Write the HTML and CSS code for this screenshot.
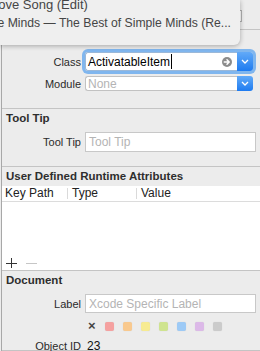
FILE: index.html
```html
<!DOCTYPE html>
<html lang="en">
<head>
    <meta charset="UTF-8">
    <title>Identity Inspector</title>
    <link rel="stylesheet" href="styles.css">
</head>
<body>
    <div class="panel">
        <section class="section top">
            <div class="row">
                <span class="label"></span>
                <div class="stub-field"></div>
            </div>
        </section>

        <section class="section custom-class">
            <h2>Custom Class</h2>
            <div class="row class-row">
                <span class="label">Class</span>
                <div class="combo focused">
                    <div class="combo-input">
                        <span class="value">ActivatableItem</span><span class="caret"></span>
                        <svg class="go" width="10" height="10" viewBox="0 0 10 10">
                            <circle cx="5" cy="5" r="5" fill="#8c8c8c"/>
                            <path d="M2.3 5h4.6M5 2.8l2.2 2.2L5 7.2" stroke="#fff" stroke-width="1.5" fill="none" stroke-linecap="round" stroke-linejoin="round"/>
                        </svg>
                    </div>
                    <div class="combo-btn">
                        <svg width="8" height="5" viewBox="0 0 8 5"><path d="M1 1l3 3 3-3" stroke="#fff" stroke-width="1.3" fill="none"/></svg>
                    </div>
                </div>
            </div>
            <div class="row module-row">
                <span class="label">Module</span>
                <div class="combo small">
                    <div class="combo-input"><span class="placeholder">None</span></div>
                    <div class="combo-btn">
                        <svg width="8" height="5" viewBox="0 0 8 5"><path d="M1 1l3 3 3-3" stroke="#fff" stroke-width="1.3" fill="none"/></svg>
                    </div>
                </div>
            </div>
        </section>

        <section class="section tooltip">
            <h2>Tool Tip</h2>
            <div class="row">
                <span class="label">Tool Tip</span>
                <div class="text-field"><span class="placeholder">Tool Tip</span></div>
            </div>
        </section>

        <section class="section runtime">
            <h2>User Defined Runtime Attributes</h2>
            <div class="table">
                <div class="table-head">
                    <span class="col key">Key Path</span>
                    <span class="col type">Type</span>
                    <span class="col val">Value</span>
                </div>
                <div class="table-body">
                    <div class="table-tools">
                        <svg width="11" height="10" viewBox="0 0 11 10"><path d="M5.5 0v10M0 5.5h11" stroke="#333" stroke-width="1"/></svg>
                        <svg width="11" height="10" viewBox="0 0 11 10"><path d="M0 5.5h11" stroke="#c6c6c6" stroke-width="1"/></svg>
                    </div>
                </div>
            </div>
        </section>

        <section class="section document">
            <h2>Document</h2>
            <div class="row">
                <span class="label">Label</span>
                <div class="text-field label-field"><span class="placeholder">Xcode Specific Label</span></div>
            </div>
            <div class="row swatches">
                <span class="label"></span>
                <span class="clear">&times;</span>
                <span class="swatch red"></span>
                <span class="swatch orange"></span>
                <span class="swatch yellow"></span>
                <span class="swatch green"></span>
                <span class="swatch blue"></span>
                <span class="swatch purple"></span>
                <span class="swatch gray"></span>
            </div>
            <div class="row object-row">
                <span class="label">Object ID</span>
                <span class="object-id">23</span>
            </div>
        </section>
    </div>

    <div class="popup">
        <div class="popup-title">Love Song (Edit)</div>
        <div class="popup-sub">Simple Minds &mdash; The Best of Simple Minds (Re...</div>
    </div>
</body>
</html>
```

FILE: styles.css
```css
body {
    margin: 0;
    font-family: "Liberation Sans", Arial, sans-serif;
    background-color: #ececec;
    color: #2a2a2a;
    overflow: hidden;
}
.panel {
    margin-left: 1px;
    border-left: 1px solid #a8a8a8;
    height: 351px;
    background-color: #ececec;
}
.section {
    border-bottom: 1px solid #c4c4c4;
    box-sizing: border-box;
}
.section h2 {
    margin: 0;
    padding-left: 4px;
    font-size: 11.5px;
    font-weight: bold;
    line-height: 19px;
    color: #2e2e2e;
}
.row {
    display: flex;
    align-items: center;
}
.label {
    width: 83px;
    flex: none;
    text-align: right;
    font-size: 11px;
    padding-right: 4px;
    box-sizing: border-box;
}

/* top section, mostly under the popup */
.section.top {
    height: 30px;
    padding-top: 10px;
}
.stub-field {
    width: 155px;
    height: 10px;
    border: 1px solid #b0b0b0;
    background: #fff;
}

/* custom class */
.section.custom-class {
    height: 79px;
    padding-top: 2px;
}
.class-row {
    margin-top: 1px;
}
.combo {
    display: flex;
    width: 168px;
    height: 19px;
    border-radius: 3px;
}
.combo.focused {
    box-shadow: 0 0 0 3px #80b6ee;
}
.combo-input {
    flex: 1;
    display: flex;
    align-items: center;
    background: #fff;
    border: 1px solid #c2c2c2;
    border-right: none;
    border-radius: 3px 0 0 3px;
    padding-left: 2px;
    font-size: 12px;
}
.combo.focused .combo-input {
    border-color: #9bb8d8;
}
.value {
    color: #000;
}
.caret {
    display: inline-block;
    width: 1px;
    height: 15px;
    background: #000;
    margin-left: 1px;
}
.go {
    margin-left: auto;
    margin-right: 5px;
}
.combo-btn {
    width: 16px;
    flex: none;
    display: flex;
    align-items: center;
    justify-content: center;
    background: linear-gradient(#62aaf8, #1e7bf0);
    border-radius: 0 3px 3px 0;
}
.module-row {
    margin-top: 5px;
}
.combo.small {
    height: 15px;
}
.placeholder {
    color: #b4b4b4;
    font-size: 12px;
}

/* tool tip */
.section.tooltip {
    height: 58px;
}
.tooltip .row {
    margin-top: 4px;
}
.text-field {
    width: 166px;
    height: 18px;
    border: 1px solid #c8c8c8;
    background: #fff;
    display: flex;
    align-items: center;
    padding-left: 3px;
}

/* runtime attributes */
.section.runtime {
    height: 104px;
}
.table {
    background: #fff;
    height: 84px;
}
.table-head {
    display: flex;
    align-items: center;
    height: 15px;
    border-bottom: 1px solid #dcdcdc;
    font-size: 12px;
    color: #222;
}
.col {
    border-left: 1px solid #dadada;
    line-height: 11px;
    padding-left: 4px;
}
.col.key {
    border-left: none;
    padding-left: 3px;
    width: 62px;
}
.col.type {
    width: 64px;
}
.table-body {
    height: 68px;
    display: flex;
    align-items: flex-end;
}
.table-tools {
    display: flex;
    gap: 9px;
    padding-left: 4px;
    padding-bottom: 2px;
}

/* document */
.section.document {
    height: 80px;
}
.document .row {
    margin-top: 4px;
}
.label-field {
    height: 17px;
}
.swatches {
    gap: 9px;
    height: 10px;
    margin-top: 8px !important;
}
.swatches .label {
    width: 77px;
}
.clear {
    font-size: 13px;
    font-weight: bold;
    color: #444;
    line-height: 10px;
}
.swatch {
    width: 9px;
    height: 9px;
    border-radius: 2px;
    box-shadow: 0 0 1px rgba(0, 0, 0, 0.15);
}
.swatch.red { background: #f5a1a0; }
.swatch.orange { background: #f9c98e; }
.swatch.yellow { background: #f7eb91; }
.swatch.green { background: #cfe48f; }
.swatch.blue { background: #9dcaf6; }
.swatch.purple { background: #dcb9e8; }
.swatch.gray { background: #cbcbcb; }
.object-row {
    margin-top: 8px !important;
    font-size: 12px;
}
.object-id {
    color: #111;
    padding-left: 2px;
}

/* floating song popup */
.popup {
    position: absolute;
    left: 0;
    top: 0;
    width: 240px;
    height: 45px;
    background: #efefef;
    border-radius: 0 0 6px 0;
    box-shadow: 0 1px 5px rgba(0, 0, 0, 0.3);
    overflow: hidden;
    color: #454545;
    white-space: nowrap;
}
.popup-title {
    font-size: 13px;
    margin-top: -3px;
    margin-left: -9px;
    line-height: 16px;
}
.popup-sub {
    font-size: 12.2px;
    margin-left: -33px;
    margin-top: 2px;
    line-height: 16px;
}
```
